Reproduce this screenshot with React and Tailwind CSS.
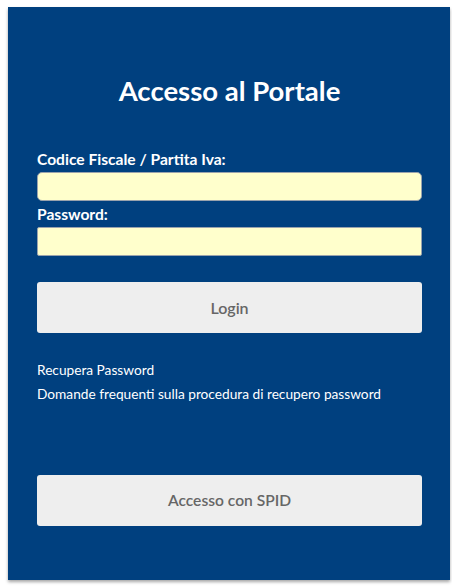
const App = () => {
    return (
        <div className="min-h-screen bg-white pt-[7px] pl-[8px]" style={{ fontFamily: "Lato, 'Open Sans', sans-serif" }}>
            <div className="w-[442px] bg-[#00407f] pl-[29px] pr-[28px] pt-[66px] pb-[54px] shadow-[0_2px_3px_rgba(0,0,0,0.35)]">
                {/* Title */}
                <h1 className="text-center text-white font-bold text-[27.5px] leading-[36px]">Accesso al Portale</h1>

                {/* Form */}
                <form className="mt-[40px] flex flex-col" onSubmit={(e) => e.preventDefault()}>
                    <label className="text-white font-bold text-[15.6px] leading-[20px]">Codice Fiscale / Partita Iva:</label>
                    <input
                        type="text"
                        className="mt-[3px] h-[29px] w-full rounded-[5px] border border-[#9aa3ad] bg-[#ffffcc] px-2 outline-none"
                    />
                    <label className="mt-[3px] text-white font-bold text-[15.6px] leading-[20px]">Password:</label>
                    <input
                        type="password"
                        className="mt-[3px] h-[29px] w-full rounded-[2px] border border-[#9aa3ad] bg-[#ffffcc] px-2 outline-none"
                    />
                    <button
                        type="submit"
                        className="mt-[26px] h-[51px] w-full rounded-[3px] bg-[#eeeeee] text-[#666666] font-semibold text-[16px]"
                    >
                        Login
                    </button>
                </form>

                {/* Links */}
                <div className="mt-[25px] flex flex-col text-white text-[13.7px] leading-[24px]">
                    <a href="#">Recupera Password</a>
                    <a href="#">Domande frequenti sulla procedura di recupero password</a>
                </div>

                <button className="mt-[69px] h-[51px] w-full rounded-[3px] bg-[#eeeeee] text-[#666666] font-semibold text-[15.6px]">
                    Accesso con SPID
                </button>
            </div>
        </div>
    )
}

export default App
